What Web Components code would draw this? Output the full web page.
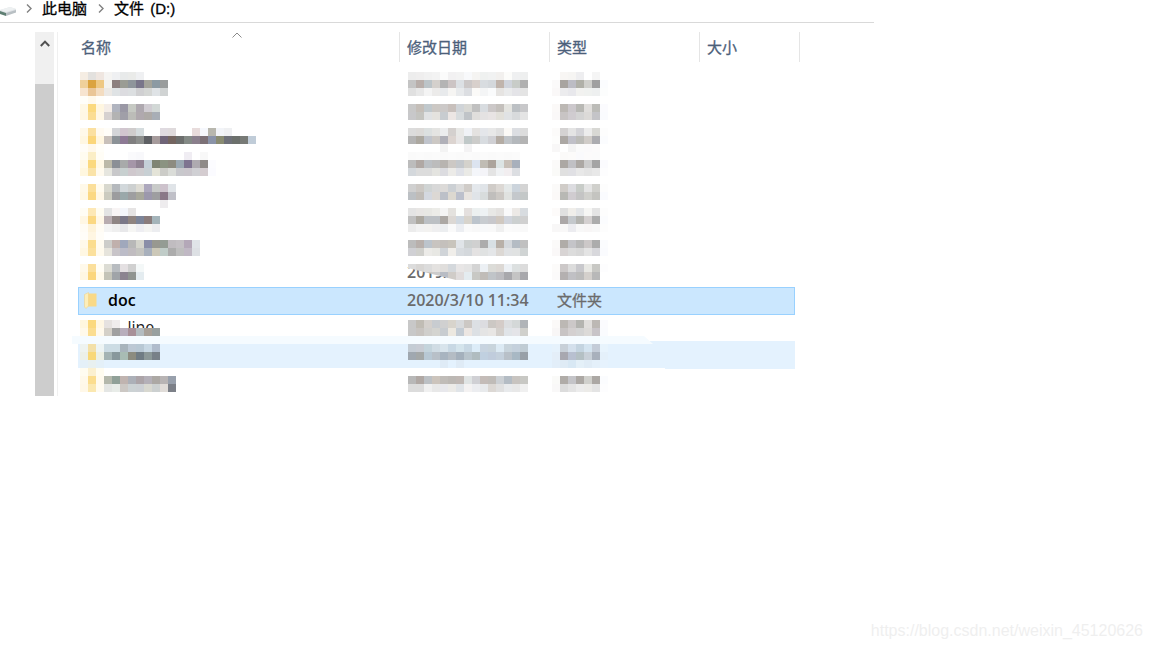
<!DOCTYPE html>
<html lang="zh">
<head>
<meta charset="utf-8">
<title>文件 (D:)</title>
<style>
html,body{margin:0;padding:0;background:#fff;}
</style>
</head>
<body>
<explorer-page>
  <path-bar></path-bar>
  <file-table>
    <file-row style="--h:24px">
      <blur-cells rows="f5ede3 e3e1de efe6e0 f5f4f2 eff0f2 e8eaea eaebe9 eff0f2|efd09b dba33f eec883 f3f2ee 8c7f7e 9a9c94 8e959b 79768a a3a39a 8b9aa3 999c9c|f7e4cf eac697 f3dcc0 ece9e5 dfe3e5 dcdce0 dcdfe1 d0d0d2 d5d7d5 dfe3e6 d0d3d3"></blur-cells>
      <blur-cells rows="ededed efeeee f1f1f1 f3f3f3 fbfbfb f2f1f2 f3f3f3 f8f9fb f5f4f2 eff1f0 f1f2f2 f2f0ee fcfcfa eff0f1 eeefef|c4c4c4 b8aeaa bcc4c8 d4d0cc b4b4b4 ccc4c4 dce0e4 ccc8c8 d8d0cc d8dce0 d4d8dc c0b4ac d0d4dc c8ccc8 b0b0b0|e0e0e0 e8e8e8 f4f4f4 ecebea e8eaec f6f5f3 e8eaec dcdee2 fbfaf8 f4f5f6 fafbfc e6e4e2 eaebec e4e4e8 e4e4e4"></blur-cells>
      <blur-cells rows="fff f8f6f4 f6f5f3 eeeef0 fff f5f5f5 fff|fbfafa a8a4a0 bcbcc4 b0b0a8 d0d0cc a0a0a0 fbfcfe|faf8f8 ececee e8e8ec f2f2f0 f0f2f0 eef0f0 fcfdfd"></blur-cells>
    </file-row>
    <file-row style="--h:32px">
      <blur-cells rows="fffef9 fff9ec fffefa|fff8e5 fbd97e fff6e0 f4ede7 b0b4bf 9a98a5 c6c9c3 aea8af d0ccd2 d2d8d6|fff7e4 fbdd93 fff7e6 d6d1d0 b3b3b3 a09fa8 bcbcb8 b0a9ae aeaaa7 a8aeb6"></blur-cells>
      <blur-cells rows="-|c8c8c8 c4beb8 c0c8cc ccc8c4 ccc9c8 c8c0bc d0d4d8 d8d8d4 c0c0c0 d8dce0 ccc8c8 c4c0bc e4e4e0 bcc0c4 c8c8ca|c8c8ca c4c4c0 e0e2e4 e4e2de c8ccd0 ece6e4 d8dcde c0c4c8 e0dedc e4e2e2 e8e4e4 e2e0da e0e2e4 d8dadc e4e4e4"></blur-cells>
      <blur-cells rows="-|fbf9f8 bcb8b4 ccc8cc b8b8b4 e0dedc bcbcb8 fbfbfe|faf8f8 c8c4c4 d0ccd0 d4d4d4 dcdad8 c4c4c8 fafbfe"></blur-cells>
    </file-row>
    <file-row style="--h:24px">
      <blur-cells rows="fff9ea fbe0a0 fffaf0 fffdf8 d4d5d8 d1c6cf cfcccc d5dcde fff fff dfdae0 dfdadc fff fff e8dcdc f6f8fd b8b7ae f2f4f8 eff0f2|fff7e2 fbd67a fff6e0 c8c0ba 8c9297 8d7a95 807f80 8d8f8d 5e6064 a69b9c 6f6478 746560 6c6e6d 848a86 8a7f8c 7c7177 8a93a8 898b72 6e7078 6c706c 777a76 c0ccd8|fffdf8 fff8ea fffef9"></blur-cells>
      <blur-cells rows="dcdcdc dcdad8 dce0e0 e4e4e2 ecedee d4d0ce e8e8e6 f0f2f6 e4e2e0 e4e6ea e8e8e8 e0e0e0 fbf9f6 dcdee2 dcdcdc|b4b4b4 aca8a0 c0c4cc ccc8c4 b0b0b8 dcd4d0 e8e6e6 c0c8c8 ccccca d8dce0 d0d0d4 b4aca4 c0c4c8 b4b8bc b4b4b4|fff fff fff fff f3f3f3 fff fff f4f3f4"></blur-cells>
      <blur-cells rows="fcfbfa d4d2d2 e4e4e4 d4d4d8 ececec d8d8d4 fdfdfd|fdfdfc aca8a4 c0c0c8 bcbcb8 d0ccc8 acacb0 fbfcfe|f8f7f7 fff f4f4f4 fbfbfb fbfafb fcfbfb fff"></blur-cells>
    </file-row>
    <file-row style="--h:32px">
      <blur-cells rows="fffcf0 fbeec6 fffdf6 fff fff fff fafafc f8f8fb fff fff fff fff fff f0edf3 fff f8f8f8|fff9e9 fbd97f fff8e6 bcb9a9 8b8f96 a8aaaa a596a8 918494 c4d0d8 7f8574 8b9382 8d8b80 9ba8b2 7e7490 aeaab0 8f8a88 fcfcff|fff7df fae3a8 fffaee e6e6df c8c8ca c8d0d0 cfc8cd cfcdd0 c8d0d4 e4e4d8 ccccc8 dadcd8 c8c8cc cac6cc d0d0d4 d4ccd0 fbfbff"></blur-cells>
      <blur-cells rows="fafafa fbfbfb fafafa fbfbfb fafafa fbfbfb fafafa fbfbfb fafafa fbfbfb fafafa fbfbfb fafafa fbfbfb|bcbcbc b0a8a4 bcc0c4 bcbcbc b8b4b0 ccc8c4 c4c8cc d4d2cc dce4f0 c0bcb4 aca49c dce4e4 c8c0b8 a8b0bc|d4d8dc dcdcdc dcdcdc e4e4e0 dcdce0 ecebe8 e0e2e8 eaeae6 f4f6fa f4f4f8 e4e4e4 f0f2f4 f2eef0 dcdee2"></blur-cells>
      <blur-cells rows="fff fbfaf9 fcfbfa fafafc fcfbfb fbfbfb fff|fbfaf9 aca8a4 c0c0c4 aca8a4 cccccc a4a4a4 fbfbfe|fafaf8 e0e0e0 e0e0e4 e8e8e8 e4e4e4 e8e8e8 fdfdfe"></blur-cells>
    </file-row>
    <file-row style="--h:24px">
      <blur-cells rows="fff9e9 fbdf9a fffbef d8d8ce b5b9bd d2d8db cdd0d0 dedcd4 ada8bd c8cac8 cdc2cc e0e4e8|fff8e5 fbd883 fff7e6 cccbbf 9c9c9e 9aa8aa 9e9ea0 a8a89c 9c98ac 9e9ea0 8a7888 c0c0c8|- - - - - - - - - - eeecee"></blur-cells>
      <blur-cells rows="d0d0d0 ccc8c4 d0d4d4 d8d8d8 dcdad8 ccd0d4 dcdcdc d0ccc8 e4e8ec e0e4e8 d0ccc8 dcd8d4 e4e8e8 ccd4dc d4d4d4|bcc0c4 c0bcb8 d4d8e0 dcd8d4 bcc0c8 dcd8d0 bcc0cc e8e4e0 e0e4e8 d8dcdc c0bebc ccc8c4 e0e2e0 c4c8cc c4c8c8"></blur-cells>
      <blur-cells rows="fbfaf9 d0ccc8 dcdce0 c8ccc8 e4e4e4 d0d0cc fdfdfd|fbf9f8 b8b8b4 d0ccd0 c4c4c4 d0d0cc c4c4c0 fafbfe"></blur-cells>
    </file-row>
    <file-row style="--h:32px">
      <blur-cells rows="fffdf5 fde8b6 fffcf1 e4e4e4 f8f4f4 f4f6fb e6e4e4|fff7e4 fbd883 fff7e7 b8acb0 8f8584 7b7888 8f8480 7c8498 8a7c7c a4b4ba|fffcf5 fef3da fffcf5 f4f4f4 efefef e8e8ea f6f6f4 eeeef2 f4f4f2 ecedf0|fffdf8 fff6e2 fffdf8"></blur-cells>
      <blur-cells rows="e4e4e4 e8e6e4 e8e8e4 ecece8 f4f4f4 e4e2de fbfdfb e4e0de ecf0f0 eef2f4 e8e8e6 e4e2e0 f9f9fa ece9e6 d8dce0|c0c0c0 aca8a0 bcc0c4 bcc0c4 aca8a4 dcd8d4 d0d8e0 d8d4cc bcc4cc c8ccd0 c8c8cc d0c8c0 d0d4dc ccd0d0 d0d0d0|ececec f2f2f2 f3f2f0 efeff0 eceef0 fafafa eceef2 fafafa f8f8f8 f8f9fa f9f9f9 f0f0f0 fbfbfb fafafa f9f9f9"></blur-cells>
      <blur-cells rows="fdfbfa e0e0e0 f0eeea e4e6e8 f6f6f4 e4e4e4 fdfdfd|fff aca8a8 c4c8cc b4b4b0 d4d0d0 acacac fbfcfe|f8f7f7 f9f8f8 ececf0 f8f8f8 f8f6f6 f8f8f8 fdfdfd"></blur-cells>
    </file-row>
    <file-row style="--h:24px">
      <blur-cells rows="fff9ea fbdd8e fffbf0 cdcdca c0b0ac a0a8bc b8b8b8 d4d4cc 8a8ea8 989890 949c94 c0bcc0 c4c0c4 b4a8b8 e0e4e8|fff7e2 fbe09c fffaed e6e4dc c8c4c8 bcbcc8 c0bcc0 c4c4c0 a8b0bc ccc8b8 c0ccc8 acacac bebebe c0b8c4 dde0e4"></blur-cells>
      <blur-cells rows="bcbcbc b8b0ac bcc4cc c8c4c0 c4c0bc c8c4bc e0e4e8 ccd0d0 d0d0d0 acacac d8e0e4 b8b0a8 d4d8dc b4bcc4 c0c0c0|d0d0d4 d0d0cc ecebe8 e8e8e4 d0d4d8 f0eeea d8dce0 d4d8dc e4e2e2 e0e2e2 e4e6e8 dcd8d4 e0e2e4 e0e2e2 d0d4d4"></blur-cells>
      <blur-cells rows="fbfaf9 b0aca8 c4c4c8 b8b8b8 ccc8c8 acacac fbfcfe|faf8f8 d8d4d4 dcdcdc d8d8d8 e4e4e4 d8d8dc fafbfe"></blur-cells>
    </file-row>
    <file-row style="--h:23px">
      <blur-cells rows="fff9ea fbdf9b fffdf5 dcdcd4 b8bcc0 e4e0e2 d0d0d0 f4f8f8|fff7e2 fbd67c fffaeb c4c4b8 a0a4a8 8c8490 909490 e4ecf0"></blur-cells>
      <div>
        <cell-text kind="peek-date">2019/</cell-text>
        <blur-cells cut rows="dcdcdc d8d6d4 dcdcdc e4e2e0 e0dedc d4d8dc e8e6e6 e4e4e4 d4d4d4 ecf0f4 dcdcd8 dcd8d4 ecf0f4 dce0e0 dcdcdc|cccccc cccccc ccc8c4 cccccc b8bcc4 d0ccc8 e0dcdc e4ecf0 c8c8c4 c0bcb8 c0c4c8 bcbcc0 a8a8ac c4c4c4 a8a8ac"></blur-cells>
      </div>
      <blur-cells rows="fcfbfa ccc8c8 dcdcdc c8c8cc e8e8e4 c8c8c4 fdfdfe|fbfafa b4b0b0 c0c0c4 bcbcbc d4d0cc b8b8b8 fff"></blur-cells>
    </file-row>
    <file-row selected style="--h:28px">
      <cell-text kind="name"><folder-icon></folder-icon>doc</cell-text>
      <cell-text kind="date">2020/3/10 11:34</cell-text>
      <cell-text kind="type">文件夹</cell-text>
    </file-row>
    <file-row style="--h:26px;--top:5px">
      <div>
        <cell-text kind="peek-name">online</cell-text>
        <blur-cells rows="fff7df fbd97e fff7e4 e6e2e0 f0eded fff - - - -|fff9ea fbdd90 fff9ec d4d0c8 a0a0a0 b8aebc a89098 b4bcc0 a8a098 98a0a0"></blur-cells>
      </div>
      <blur-cells rows="c8c8c8 c0bcb4 d4d0cc c8ccd0 d0d0d0 d8d4cc d8dadc ccc8c4 dce0e4 dcdce0 ccc8c4 d4ccc8 dcdee0 d4d8d8 b0b4b8|c8c8c8 c8c4c0 d0cfcc d4d4d0 c8ccd0 ece8e0 c4ccd4 ece6e2 dce0e4 e4e4e4 e8e6e4 d4d0cc e0e4e8 e4e4e8 d0d0cc"></blur-cells>
      <blur-cells rows="fbf9f8 bcb8b4 ccc8c8 b4b4b0 e0dedc bcb8b4 fbfbfe|f8f6f6 c8c4c4 d4d0d0 d4d4d4 dcdad8 c8c4c8 fafbfe"></blur-cells>
    </file-row>
    <file-row hover style="--h:27px;--top:3px">
      <blur-cells rows="eef3f0 f3e0a8 edf4f4 ccdce4 ccdce4 a8b4bc bcc8d4 b8c8d4 c8d8e4 b0bccc|ecf0e8 f8d878 ecf0e4 a4b4b4 88989c a8bcb4 8c8c80 707c84 8c9898 788088|e4f0f8 e8f0f0 e4f0f8"></blur-cells>
      <blur-cells rows="c4ccd4 c8ccd4 c4d4dc d0dce4 d8e4ec c8d8e4 d4e4ec c8d8e4 dcecf8 c8d4e0 c8d4dc dceaf4 c8d4dc c4d0dc c0ccd4|a0a8b0 a4a8a8 b8c8d4 b8c0c8 a8b4c0 b4bcc4 a4b0bc b8c4cc b0bcc0 c0d0e0 c0ccdc c4d0dc b8c0c8 a8b8c4 98a0a8|- - - - dfebf6 - dfebf6"></blur-cells>
      <blur-cells rows="e6f2fc c8d0d8 d4e0ec c4d4e0 d4e4f0 c4ccd8 e8f4fd|e4eef8 a8a8b0 b8c0d0 b4c0c4 c8d0d8 a8b0bc e4f0fa|e2eef9 dfebf5 d8e8f4 e4f0f8 e0ecf6 e4f0fa e6f2fd"></blur-cells>
    </file-row>
    <file-row style="--h:28px">
      <blur-cells rows="fffcf0 fbf0d0 fffcf0|fff9ea fbdd8e fffaee b4b8ac 90a098 c0b4b0 acb0b8 aca4a8 b4b0b8 aca8a4 b8b4b4 98a0ac|fff8e8 fbe8b0 fffbf0 e4e6e4 e8ece8 ccc8c4 ccd2d4 ccd0d4 d8d8d0 ccd0d0 e0dcd8 7c8088"></blur-cells>
      <blur-cells rows="-|b8b8b8 b0a8a4 bcc0c4 ccc4bc c0bcb8 bcb8b4 c0b8b4 e0e4e4 d0d0d4 c4bcb8 c0bcb8 ccd0d4 b4bcc4 c8c4c0 c8c8c4|dcdcdc dcdcdc f0f0f0 e8e8e8 e8e8ec ecebe8 e0e4e8 f4f2f2 ecedf0 e8eaec dcd8d4 e0e0e0 e8eaec e8e8e8 f0f0f0"></blur-cells>
      <blur-cells rows="-|fafaf8 b0aca8 c4c4c8 aca8a4 d0d0cc aca8a4 fbfcfe|f9f8f8 dcdcdc e4e4e4 ececec ecebe8 e4e4e4 fdfdfe"></blur-cells>
    </file-row>
  </file-table>
  <water-mark>https://blog.csdn.net/weixin_45120626</water-mark>
</explorer-page>

<script>
const UI_FONT = '"Noto Sans CJK SC","Noto Sans",sans-serif';

class ExplorerPage extends HTMLElement {
    constructor() {
        super();
        this.attachShadow({ mode: 'open' });
    }
    connectedCallback() {
        this.shadowRoot.innerHTML = /*html*/`
        <style>
        :host{
            display:flex;
            flex-direction:column;
            height:648px;
            overflow:hidden;
            font-family:${UI_FONT};
            font-size:15px;
        }
        </style>
        <slot></slot>`;
    }
}

class PathBar extends HTMLElement {
    constructor() {
        super();
        this.attachShadow({ mode: 'open' });
    }
    connectedCallback() {
        const chevron = cls => /*html*/`<svg class="chev ${cls}" width="6" height="9" viewBox="0 0 6 9"><path d="M1 .5 5 4.5 1 8.5" fill="none" stroke="#808080" stroke-width="1.4"/></svg>`;
        this.shadowRoot.innerHTML = /*html*/`
        <style>
        :host{
            display:flex;
            align-items:flex-start;
            flex:none;
            width:874px;
            height:22px;
            border-bottom:1px solid #d9d9d9;
            color:#000;
        }
        .drive{margin-top:6px;flex:none;}
        .chev{flex:none;margin-top:4px;}
        .one{margin-left:10px;margin-right:10px;}
        .two{margin-left:11px;margin-right:10px;}
        span{
            font-family:"Liberation Sans","Noto Sans CJK SC",sans-serif;
            line-height:14px;
            margin-top:2px;
            word-spacing:2px;
            -webkit-text-stroke:.3px #000;
        }
        </style>
        <svg class="drive" width="16" height="12" viewBox="0 0 16 12">
            <path d="M0 4 10 1 16 3V6L6 9 0 7Z" fill="#dfe3e6"/>
            <path d="M0 4 6 6 16 3 10 1Z" fill="#eef1f2"/>
            <path d="M0 5 6 7V10L0 8Z" fill="#5f7f73"/>
            <path d="M6 7 16 4V6.5L6 10Z" fill="#b9c0c4"/>
        </svg>
        ${chevron('one')}
        <span>此电脑</span>
        ${chevron('two')}
        <span>文件 (D:)</span>`;
    }
}

class FileTable extends HTMLElement {
    constructor() {
        super();
        this.attachShadow({ mode: 'open' });
    }
    connectedCallback() {
        this.shadowRoot.innerHTML = /*html*/`
        <style>
        :host{
            display:flex;
            flex:none;
            height:364px;
            margin-top:9px;
            padding-left:35px;
            overflow:hidden;
        }
        .scroll{
            flex:none;
            width:19px;
            display:flex;
            flex-direction:column;
            background:#f0f0f0;
        }
        .up{flex:none;height:52px;display:flex;justify-content:center;padding-top:8px;box-sizing:border-box;}
        .thumb{flex:1;background:#cdcdcd;}
        .rule{flex:none;width:1px;margin-left:3px;background:#f0f0f0;}
        .pane{flex:none;margin-left:20px;width:722px;}
        .head{
            display:grid;
            grid-template-columns:322px 150px 150px 100px;
            height:30px;
            margin-bottom:10px;
            color:#4c607a;
            line-height:30px;
        }
        .head div{position:relative;box-sizing:border-box;padding-left:7px;border-right:1px solid #e5e5e5;-webkit-text-stroke:.3px #4c607a;}
        .head div:first-child{padding-left:3px;}
        .sort{position:absolute;left:154px;top:0;}
        .rows{width:717px;}
        </style>
        <div class="scroll">
            <div class="up"><svg width="10" height="7" viewBox="0 0 10 7"><path d="M.8 6 5 1.6 9.2 6" fill="none" stroke="#505050" stroke-width="2"/></svg></div>
            <div class="thumb"></div>
        </div>
        <div class="rule"></div>
        <div class="pane">
            <div class="head">
                <div>名称<svg class="sort" width="10" height="6" viewBox="0 0 10 6"><path d="M.5 5.5 5 1 9.5 5.5" fill="none" stroke="#8a8a8a"/></svg></div>
                <div>修改日期</div>
                <div>类型</div>
                <div>大小</div>
            </div>
            <div class="rows"><slot></slot></div>
        </div>`;
    }
}

class FileRow extends HTMLElement {
    constructor() {
        super();
        this.attachShadow({ mode: 'open' });
    }
    connectedCallback() {
        this.shadowRoot.innerHTML = /*html*/`
        <style>
        :host{
            display:grid;
            grid-template-columns:330px 144px 1fr;
            align-content:start;
            position:relative;
            box-sizing:border-box;
            height:var(--h);
            padding-top:var(--top,0);
        }
        :host([selected]){
            background:#cbe7fe;
            box-shadow:inset 0 0 0 1px #99d1ff;
            align-content:stretch;
        }
        :host([hover])::before{
            content:'';
            position:absolute;
            left:0;right:0;top:0;
            height:28px;
            background:
                linear-gradient(#e4f2fe,#e4f2fe) 0 0/100% 27px no-repeat,
                linear-gradient(#e4f2fe,#e4f2fe) right 0 top 0/130px 28px no-repeat;
        }
        :host([hover])::after{
            content:'';
            position:absolute;
            left:-6px;top:-5px;
            width:581px;
            height:8px;
            background:#f5fbff;
            clip-path:polygon(0 0,572px 0,100% 100%,0 100%);
        }
        ::slotted(*){position:relative;z-index:1;}
        ::slotted(:first-child){margin-left:2px;}
        </style>
        <slot></slot>`;
    }
}

class BlurCells extends HTMLElement {
    constructor() {
        super();
        this.attachShadow({ mode: 'open' });
    }
    connectedCallback() {
        const rows = this.getAttribute('rows').split('|').map(r => r.split(' '));
        const cols = Math.max(...rows.map(r => r.length));
        let cells = '';
        rows.forEach(r => {
            for (let i = 0; i < cols; i++) {
                const c = r[i];
                cells += c && c !== '-' ? `<i style="background:#${c}"></i>` : '<i></i>';
            }
        });
        this.shadowRoot.innerHTML = /*html*/`
        <style>
        :host{display:block;position:relative;}
        :host([cut]){clip-path:polygon(0 0,100% 0,100% 100%,48px 100%,48px 16px,0 4px);}
        .grid{display:grid;grid-template-columns:repeat(${cols},8px);grid-auto-rows:8px;}
        i{display:block;}
        </style>
        <div class="grid">${cells}</div>`;
    }
}

class CellText extends HTMLElement {
    constructor() {
        super();
        this.attachShadow({ mode: 'open' });
    }
    connectedCallback() {
        this.shadowRoot.innerHTML = /*html*/`
        <style>
        :host{display:flex;align-items:center;padding-bottom:2px;box-sizing:border-box;line-height:26px;color:#6b6b6b;white-space:nowrap;-webkit-text-stroke:.3px #6b6b6b;}
        :host([kind="name"]){color:#000;font-family:"Open Sans",sans-serif;font-weight:600;font-size:16px;margin-left:8px;-webkit-text-stroke:0;}
        :host([kind="date"]){margin-left:-1px;font-family:"Open Sans",sans-serif;font-weight:600;font-size:16px;-webkit-text-stroke:0;}
        :host([kind="type"]){margin-left:5px;}
        :host([kind="peek-name"]){position:absolute;left:28px;top:-6px;color:#222;font-family:"Open Sans",sans-serif;font-size:16px;-webkit-text-stroke:0;}
        :host([kind="peek-date"]){position:absolute;left:-1px;top:-5px;font-family:"Open Sans",sans-serif;font-weight:600;font-size:16px;-webkit-text-stroke:0;}
        </style>
        <slot></slot>`;
    }
}

class FolderIcon extends HTMLElement {
    constructor() {
        super();
        this.attachShadow({ mode: 'open' });
    }
    connectedCallback() {
        this.shadowRoot.innerHTML = /*html*/`
        <style>
        :host{display:block;flex:none;width:13px;height:17px;margin-left:4px;margin-right:11px;}
        svg{display:block;}
        </style>
        <svg width="13" height="17" viewBox="0 0 13 17">
            <path d="M3 1.5H12.5V14.5H3Z" fill="#f9d987"/>
            <path d="M.5 2.5 4.5.5V14L2 16.5 .5 15Z" fill="#fdeeb9" stroke="#eecf85" stroke-width=".5"/>
        </svg>`;
    }
}

class WaterMark extends HTMLElement {
    constructor() {
        super();
        this.attachShadow({ mode: 'open' });
    }
    connectedCallback() {
        this.shadowRoot.innerHTML = /*html*/`
        <style>
        :host{
            display:block;
            margin-top:auto;
            padding:0 9px 7px 0;
            text-align:right;
            font:16px/20px "Liberation Sans",Arial,sans-serif;
            color:#efefef;
        }
        </style>
        <slot></slot>`;
    }
}

customElements.define('explorer-page', ExplorerPage);
customElements.define('path-bar', PathBar);
customElements.define('file-table', FileTable);
customElements.define('file-row', FileRow);
customElements.define('blur-cells', BlurCells);
customElements.define('cell-text', CellText);
customElements.define('folder-icon', FolderIcon);
customElements.define('water-mark', WaterMark);
</script>
</body>
</html>
